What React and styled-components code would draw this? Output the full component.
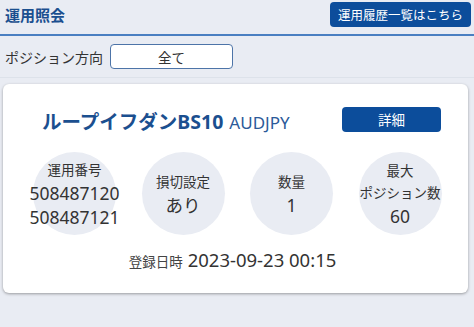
import React from 'react';
import styled, { createGlobalStyle } from 'styled-components';

const GlobalStyle = createGlobalStyle`
  body {
    margin: 0;
    background-color: #e9ecf3;
    font-family: "Noto Sans", "Noto Sans CJK JP", sans-serif;
    color: #333;
  }
`;

const Page = styled.div`
  width: 474px;
  height: 327px;
  background-color: #e9ecf3;
  overflow: hidden;
`;

const Header = styled.div`
  display: flex;
  justify-content: space-between;
  align-items: center;
  height: 36px;
  padding: 0 3px 0 5px;
  border-bottom: 2px solid #4a7fc1;
  box-sizing: border-box;
`;

const Title = styled.h1`
  margin: 0;
  font-size: 15px;
  font-weight: bold;
  color: #1b4f8f;
  line-height: 1;
  margin-top: -3px;
`;

const BlueButton = styled.button`
  border: unset;
  background-color: #0c4d9b;
  color: white;
  border-radius: 4px;
  font-family: inherit;
  font-size: ${p => p.$size || 12.5}px;
  height: 25px;
  width: ${p => p.$width}px;
  padding: 0;
  cursor: pointer;
`;

const HeaderButton = styled(BlueButton)`
  margin-top: -5px;
`;

const FilterRow = styled.div`
  display: flex;
  align-items: center;
  gap: 7px;
  height: 41px;
  padding-left: 5px;
  border-bottom: 1px solid #dde2ea;
`;

const FilterLabel = styled.span`
  font-size: 14px;
  color: #333;
`;

const SelectBox = styled.div`
  width: 123px;
  height: 25px;
  box-sizing: border-box;
  border: 1px solid #4d74a8;
  border-radius: 4px;
  background-color: white;
  display: flex;
  align-items: center;
  justify-content: center;
  font-size: 13.5px;
  color: #333;
`;

const Card = styled.div`
  margin: 6px 6px 0 3px;
  height: 209px;
  background-color: white;
  border-radius: 6px;
  box-shadow: 0 1px 3px rgba(0, 0, 0, 0.35);
  box-sizing: border-box;
  padding-top: 19px;
`;

const CardHead = styled.div`
  display: flex;
  align-items: center;
  justify-content: space-between;
  padding: 0 27px 0 39px;
`;

const Name = styled.div`
  display: flex;
  align-items: baseline;
  gap: 6px;
  margin-top: 3px;
`;

const Strategy = styled.span`
  font-size: 19.5px;
  font-weight: bold;
  color: #1b4f8f;
`;

const Pair = styled.span`
  font-size: 17px;
  color: #2b5a99;
`;

const Circles = styled.div`
  display: flex;
  gap: 25.5px;
  padding-left: 30px;
  margin-top: 17px;
`;

const Circle = styled.div`
  width: 83px;
  height: 83px;
  border-radius: 50%;
  background-color: #e9ecf3;
  display: flex;
  flex-direction: column;
  align-items: center;
  justify-content: center;
  white-space: nowrap;
`;

const Label = styled.div`
  font-size: 13.5px;
  line-height: 22px;
  color: #333;
`;

const Value = styled.div`
  font-size: 17.5px;
  line-height: 24px;
  color: #333;
`;

const DateRow = styled.div`
  display: flex;
  justify-content: center;
  align-items: baseline;
  gap: 5px;
  margin-top: 12px;
  padding-right: 6px;
`;

const DateLabel = styled.span`
  font-size: 13.5px;
  color: #444;
`;

const DateValue = styled.span`
  font-size: 18.5px;
  color: #333;
`;

const stats = [
  { labels: ['運用番号'], values: ['508487120', '508487121'] },
  { labels: ['損切設定'], values: ['あり'] },
  { labels: ['数量'], values: ['1'] },
  { labels: ['最大', 'ポジション数'], values: ['60'] },
];

const App = () => {
  return (
    <Page>
      <GlobalStyle />
      <Header>
        <Title>運用照会</Title>
        <HeaderButton $width={141}>運用履歴一覧はこちら</HeaderButton>
      </Header>
      <FilterRow>
        <FilterLabel>ポジション方向</FilterLabel>
        <SelectBox>全て</SelectBox>
      </FilterRow>
      <Card>
        <CardHead>
          <Name>
            <Strategy>ループイフダンBS10</Strategy>
            <Pair>AUDJPY</Pair>
          </Name>
          <BlueButton $width={99} $size={13.5}>詳細</BlueButton>
        </CardHead>
        <Circles>
          {stats.map((s, i) => (
            <Circle key={i}>
              {s.labels.map(l => <Label key={l}>{l}</Label>)}
              {s.values.map(v => <Value key={v}>{v}</Value>)}
            </Circle>
          ))}
        </Circles>
        <DateRow>
          <DateLabel>登録日時</DateLabel>
          <DateValue>2023-09-23 00:15</DateValue>
        </DateRow>
      </Card>
    </Page>
  );
};

export default App;
